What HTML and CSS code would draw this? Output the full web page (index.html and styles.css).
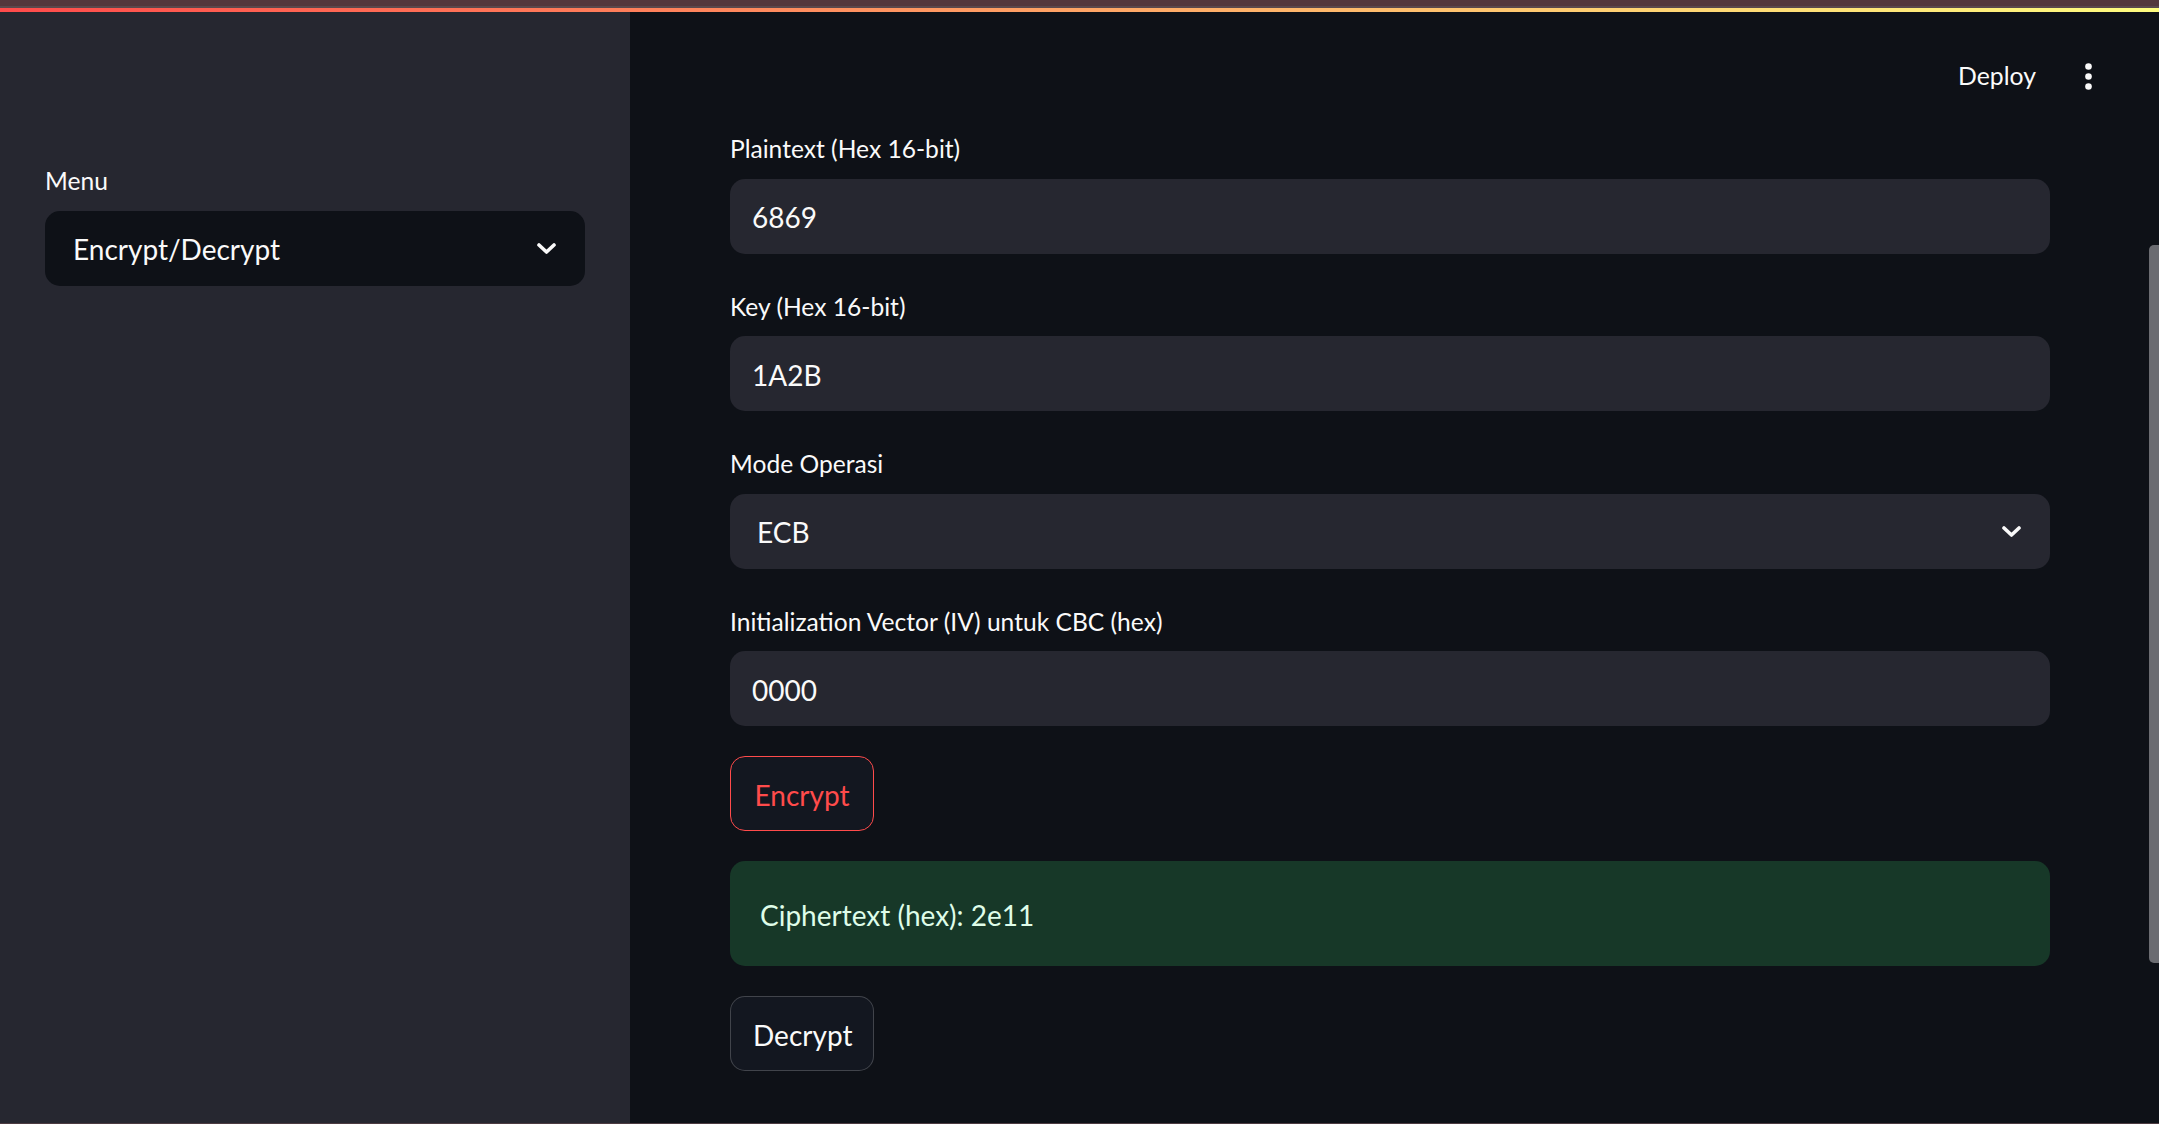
FILE: index.html
```html
<!DOCTYPE html>
<html lang="en">
<head>
<meta charset="utf-8">
<title>Encrypt/Decrypt</title>
<link rel="stylesheet" href="styles.css">
</head>
<body>
<div class="frame-top"></div>
<div class="frame-line"></div>
<div class="decoration"></div>
<div class="app">
  <aside class="sidebar">
    <div class="label">Menu</div>
    <div class="select select-dark">
      <span>Encrypt/Decrypt</span>
      <svg class="chevron" width="19" height="11" viewBox="0 0 19 11"><polyline points="2,2 9.5,9 17,2" fill="none" stroke="#fafafa" stroke-width="3.6" stroke-linecap="round" stroke-linejoin="round"/></svg>
    </div>
  </aside>
  <main class="main">
    <header class="header">
      <span class="deploy">Deploy</span>
      <svg class="kebab" width="7" height="27" viewBox="0 0 7 27"><circle cx="3.5" cy="3.5" r="3.3" fill="#fafafa"/><circle cx="3.5" cy="13.5" r="3.3" fill="#fafafa"/><circle cx="3.5" cy="23.5" r="3.3" fill="#fafafa"/></svg>
    </header>
    <div class="content">
      <div class="field">
        <div class="label">Plaintext (Hex 16-bit)</div>
        <div class="input">6869</div>
      </div>
      <div class="field">
        <div class="label">Key (Hex 16-bit)</div>
        <div class="input">1A2B</div>
      </div>
      <div class="field">
        <div class="label">Mode Operasi</div>
        <div class="select">
          <span>ECB</span>
          <svg class="chevron" width="19" height="11" viewBox="0 0 19 11"><polyline points="2,2 9.5,9 17,2" fill="none" stroke="#fafafa" stroke-width="3.6" stroke-linecap="round" stroke-linejoin="round"/></svg>
        </div>
      </div>
      <div class="field">
        <div class="label">Initialization Vector (IV) untuk CBC (hex)</div>
        <div class="input">0000</div>
      </div>
      <div class="row"><button class="btn btn-active">Encrypt</button></div>
      <div class="success">Ciphertext (hex): 2e11</div>
      <div class="row"><button class="btn">Decrypt</button></div>
    </div>
    <div class="scrollbar"></div>
  </main>
</div>
<div class="frame-bottom"></div>
</body>
</html>
```
FILE: styles.css
```css
html, body {
  margin: 0;
  padding: 0;
  height: 1124px;
  overflow: hidden;
  background: #0e1117;
  color: #fafafa;
  font-family: "Lato", "Source Sans Pro", "Noto Sans", sans-serif;
}

.frame-top {
  height: 6px;
  background: #54373c;
}

.frame-line {
  height: 2px;
  background: #5b484c;
}

.decoration {
  height: 4px;
  background: linear-gradient(90deg, #ff4b4b, #fffd80);
}

.app {
  display: flex;
  height: 1111px;
}

.frame-bottom {
  height: 1px;
  background: #4c3b41;
}

.sidebar {
  width: 630px;
  flex: none;
  box-sizing: border-box;
  background: #262730;
  padding: 146px 45px 0 45px;
}

.label {
  height: 45px;
  line-height: 45px;
  font-size: 24.6px;
  margin-bottom: 7.5px;
  white-space: nowrap;
}

.select {
  height: 75px;
  box-sizing: border-box;
  border-radius: 15px;
  background: #262730;
  display: flex;
  align-items: center;
  justify-content: space-between;
  padding: 2px 29px 0 27px;
  font-size: 28px;
}

.select-dark {
  background: #0e1117;
  padding-left: 28px;
}

.chevron {
  display: block;
  margin-top: -2px;
}

.main {
  flex: 1;
  position: relative;
  background: #0e1117;
}

.header {
  height: 114px;
  box-sizing: border-box;
  padding: 44px 67px 0 0;
  display: flex;
  justify-content: flex-end;
  align-items: flex-start;
  gap: 49px;
}

.deploy {
  line-height: 40px;
  font-size: 24.8px;
}

.kebab {
  margin-top: 7px;
}

.content {
  width: 1320px;
  margin-left: 100px;
  display: flex;
  flex-direction: column;
  gap: 30px;
}

.field {
  display: flex;
  flex-direction: column;
}

.input {
  height: 75px;
  box-sizing: border-box;
  border-radius: 15px;
  background: #262730;
  display: flex;
  align-items: center;
  padding: 2px 0 0 22px;
  font-size: 28px;
}

.row {
  display: flex;
}

.btn {
  height: 75px;
  box-sizing: border-box;
  padding: 2px 22px 0 22px;
  border-radius: 15px;
  border: 1.5px solid rgba(250, 250, 250, 0.2);
  background: #131720;
  color: #fafafa;
  font-family: inherit;
  font-size: 28px;
  width: 144px;
}

.btn-active {
  border-color: #ff4b4b;
  color: #ff4b4b;
}

.success {
  height: 105px;
  box-sizing: border-box;
  border-radius: 15px;
  background: #173828;
  color: #dffde9;
  padding: 2px 30px 0 30px;
  display: flex;
  align-items: center;
  font-size: 28px;
}

.scrollbar {
  position: absolute;
  right: 0;
  top: 233px;
  width: 10px;
  height: 718px;
  border-radius: 5px 0 0 5px;
  background: #6b6c71;
}
```
